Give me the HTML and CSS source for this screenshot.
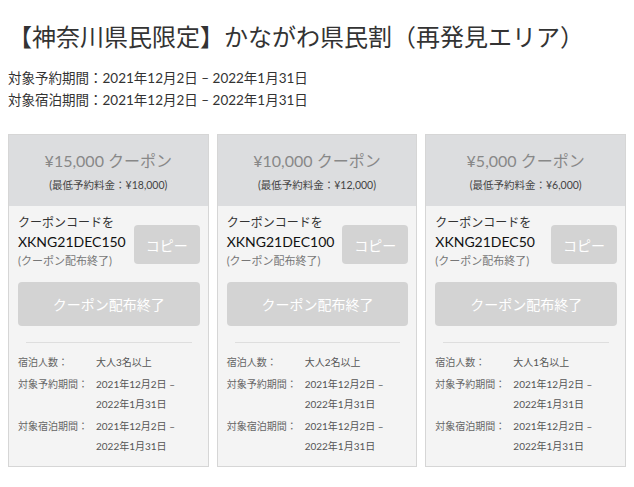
FILE: index.html
```html
<!DOCTYPE html>
<html lang="ja">
<head>
  <meta charset="UTF-8" />
  <meta name="viewport" content="width=device-width, initial-scale=1.0"/>
  <title>かながわ県民割</title>
  <link rel="stylesheet" href="styles.css">
</head>
<body>

  <!-- Campaign heading -->
  <h1 class="page-title">【神奈川県民限定】かながわ県民割（再発見エリア）</h1>
  <div class="period">
    <p>対象予約期間：2021年12月2日 – 2022年1月31日</p>
    <p>対象宿泊期間：2021年12月2日 – 2022年1月31日</p>
  </div>

  <!-- Coupon cards -->
  <div class="coupon-list">

    <div class="coupon">
      <div class="coupon-head">
        <div class="coupon-amount">¥15,000 クーポン</div>
        <div class="coupon-min">(最低予約料金：¥18,000)</div>
      </div>
      <div class="coupon-body">
        <div class="code-row">
          <div class="code-text">
            <div class="code-label">クーポンコードを</div>
            <div class="code-value">XKNG21DEC150</div>
            <div class="code-note">(クーポン配布終了)</div>
          </div>
          <button class="copy-btn" disabled>コピー</button>
        </div>
        <button class="get-btn" disabled>クーポン配布終了</button>
        <div class="divider"></div>
        <dl class="details">
          <dt>宿泊人数：</dt><dd>大人3名以上</dd>
          <dt>対象予約期間：</dt><dd>2021年12月2日 –<br>2022年1月31日</dd>
          <dt>対象宿泊期間：</dt><dd>2021年12月2日 –<br>2022年1月31日</dd>
        </dl>
      </div>
    </div>

    <div class="coupon">
      <div class="coupon-head">
        <div class="coupon-amount">¥10,000 クーポン</div>
        <div class="coupon-min">(最低予約料金：¥12,000)</div>
      </div>
      <div class="coupon-body">
        <div class="code-row">
          <div class="code-text">
            <div class="code-label">クーポンコードを</div>
            <div class="code-value">XKNG21DEC100</div>
            <div class="code-note">(クーポン配布終了)</div>
          </div>
          <button class="copy-btn" disabled>コピー</button>
        </div>
        <button class="get-btn" disabled>クーポン配布終了</button>
        <div class="divider"></div>
        <dl class="details">
          <dt>宿泊人数：</dt><dd>大人2名以上</dd>
          <dt>対象予約期間：</dt><dd>2021年12月2日 –<br>2022年1月31日</dd>
          <dt>対象宿泊期間：</dt><dd>2021年12月2日 –<br>2022年1月31日</dd>
        </dl>
      </div>
    </div>

    <div class="coupon">
      <div class="coupon-head">
        <div class="coupon-amount">¥5,000 クーポン</div>
        <div class="coupon-min">(最低予約料金：¥6,000)</div>
      </div>
      <div class="coupon-body">
        <div class="code-row">
          <div class="code-text">
            <div class="code-label">クーポンコードを</div>
            <div class="code-value">XKNG21DEC50</div>
            <div class="code-note">(クーポン配布終了)</div>
          </div>
          <button class="copy-btn" disabled>コピー</button>
        </div>
        <button class="get-btn" disabled>クーポン配布終了</button>
        <div class="divider"></div>
        <dl class="details">
          <dt>宿泊人数：</dt><dd>大人1名以上</dd>
          <dt>対象予約期間：</dt><dd>2021年12月2日 –<br>2022年1月31日</dd>
          <dt>対象宿泊期間：</dt><dd>2021年12月2日 –<br>2022年1月31日</dd>
        </dl>
      </div>
    </div>

  </div>

</body>
</html>
```

FILE: styles.css
```css
* {
  margin: 0;
  padding: 0;
  box-sizing: border-box;
  font-family: Lato, "Noto Sans CJK JP", sans-serif;
}

body {
  margin: 8px;
  background-color: #fff;
  color: #333;
}

.page-title {
  margin-top: 12px;
  font-size: 24px;
  font-weight: normal;
  line-height: 34px;
  color: #333;
}

.period {
  margin-top: 13px;
  font-size: 13.5px;
  line-height: 22px;
  color: #333;
}

.coupon-list {
  display: grid;
  grid-template-columns: repeat(3, 1fr);
  gap: 8px;
  margin-top: 23px;
}

.coupon {
  border: 1px solid #d6d6d6;
  background-color: #f4f4f4;
}

.coupon-head {
  background-color: #dcdddf;
  text-align: center;
  padding: 13px 0 12px;
}

.coupon-amount {
  font-size: 16px;
  line-height: 26px;
  color: #888;
}

.coupon-min {
  margin-top: 2px;
  font-size: 10.5px;
  line-height: 18px;
  color: #444;
}

.coupon-body {
  padding: 7px 8px 10px 9px;
}

.code-row {
  display: flex;
  align-items: center;
  justify-content: space-between;
}

.code-label {
  font-size: 12px;
  line-height: 19px;
  color: #333;
}

.code-value {
  font-size: 14px;
  line-height: 19px;
  color: #111;
}

.code-note {
  font-size: 11px;
  line-height: 19px;
  color: #777;
}

.copy-btn {
  width: 66px;
  height: 39px;
  margin-top: 6px;
  border: none;
  border-radius: 4px;
  background-color: #d3d3d3;
  color: #fff;
  font-size: 14px;
}

.get-btn {
  display: block;
  width: 100%;
  height: 44px;
  margin-top: 12px;
  border: none;
  border-radius: 4px;
  background-color: #d3d3d3;
  color: #fff;
  font-size: 14px;
}

.divider {
  height: 1px;
  margin: 16px 8px 9px;
  background-color: #dedede;
}

.details {
  display: grid;
  grid-template-columns: 78px 1fr;
  row-gap: 2px;
  font-size: 10px;
  line-height: 20px;
}

.details dt {
  color: #666;
}

.details dd {
  color: #555;
}
```
